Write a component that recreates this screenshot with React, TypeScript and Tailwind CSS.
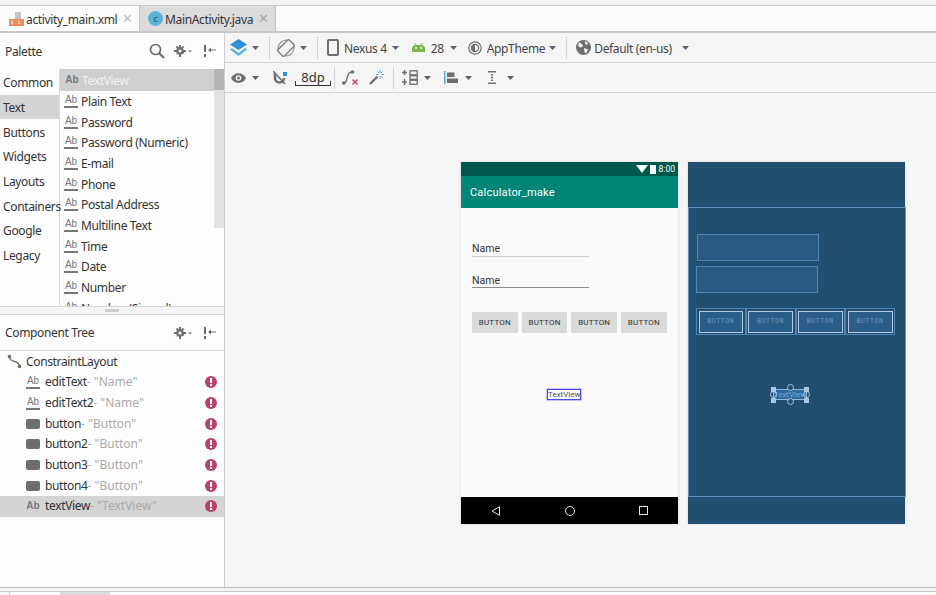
const Caret = ({ className = "" }: { className?: string }) => (
  <svg width="7" height="4" viewBox="0 0 7 4" className={className}>
    <path d="M0 0h7L3.500 4z" fill="#5e6266" />
  </svg>
);

const Sep = ({ className = "" }: { className?: string }) => (
  <div className={`w-px h-[22px] bg-[#d4d4d4] ${className}`} />
);

const AbIcon = ({ line = true }: { line?: boolean }) => (
  <div className="w-[14px] flex flex-col items-center shrink-0">
    <span className={`text-[10px] leading-[10px] tracking-normal text-[#777] font-['Liberation_Sans',sans-serif] ${line ? "font-normal" : "font-semibold"}`}>Ab</span>
    {line && <div className="w-[14px] h-[2px] mt-[1px] bg-[#777]" />}
  </div>
);

const GearMenu = () => (
  <svg width="18" height="14" viewBox="0 0 18 14">
    <g fill="#6e6e6e">
      <circle cx="6" cy="7" r="3.800" />
      <path d="M5 1h2v12H5zM0 6h12v2H0z" />
      <path d="M1.800 3.200 3.200 1.800l7 7-1.400 1.400zM1.800 10.800l7-9 1.400 1.400-7 7z" />
    </g>
    <circle cx="6" cy="7" r="1.500" fill="#fdfdfd" />
    <path d="M14 6.500h4l-2 2z" fill="#6e6e6e" />
  </svg>
);

const Pin = () => (
  <svg width="12" height="12" viewBox="0 0 12 12">
    <path d="M0 0h2v7H0zM0 9h2v3H0z" fill="#6e6e6e" />
    <path d="M5 4.500h7v1H5z" fill="#6e6e6e" />
    <path d="M4 5l3-2.500v5z" fill="#6e6e6e" />
  </svg>
);

const ErrorDot = () => (
  <div className="w-[12px] h-[12px] rounded-full bg-[#b8426a] flex flex-col items-center justify-center shrink-0">
    <div className="w-[2px] h-[5px] bg-white" />
    <div className="w-[2px] h-[2px] mt-[1px] bg-white" />
  </div>
);

const paletteCats = ["Common", "Text", "Buttons", "Widgets", "Layouts", "Containers", "Google", "Legacy"];
const paletteItems = [
  "Plain Text",
  "Password",
  "Password (Numeric)",
  "E-mail",
  "Phone",
  "Postal Address",
  "Multiline Text",
  "Time",
  "Date",
  "Number",
  "Number (Signed)",
];

const treeItems = [
  { name: "editText", label: '"Name"', kind: "text" },
  { name: "editText2", label: '"Name"', kind: "text" },
  { name: "button", label: '"Button"', kind: "button" },
  { name: "button2", label: '"Button"', kind: "button" },
  { name: "button3", label: '"Button"', kind: "button" },
  { name: "button4", label: '"Button"', kind: "button" },
  { name: "textView", label: '"TextView"', kind: "view" },
];

const Palette = () => (
  <div className="h-[273px] flex flex-col shrink-0">
    <div className="h-[36px] flex items-center pl-[5px] pr-[8px] shrink-0">
      <span className="text-[#333] pt-[2px]">Palette</span>
      <svg width="16" height="16" viewBox="0 0 16 16" className="ml-auto">
        <circle cx="6.500" cy="6.500" r="5" fill="none" stroke="#6e6e6e" strokeWidth="1.700" />
        <path d="M10 10l5 5" stroke="#6e6e6e" strokeWidth="2.200" />
      </svg>
      <div className="ml-[9px] flex"><GearMenu /></div>
      <div className="ml-[12px] flex"><Pin /></div>
    </div>
    <div className="flex flex-1 overflow-hidden">
      <div className="w-[60px] border-r border-[#d8d8d8] shrink-0 pt-[1px]">
        {paletteCats.map((c) => (
          <div
            key={c}
            className={`h-[24.7px] pl-[3px] pt-[2px] flex items-center text-[#333] ${c === "Text" ? "bg-[#d4d4d4]" : ""}`}
          >
            {c}
          </div>
        ))}
      </div>
      <div className="flex-1 flex relative overflow-hidden">
        <div className="flex-1">
          <div className="h-[22px] bg-[#cfcfcf] flex items-center pl-[5px] gap-[3px]">
            <AbIcon line={false} />
            <span className="text-[#f2f2f2] pt-[1px]">TextView</span>
          </div>
          {paletteItems.map((p) => (
            <div key={p} className="h-[20.7px] flex items-center pl-[4px] gap-[3px] text-[#333]">
              <AbIcon />
              <span className="pt-[1px]">{p}</span>
            </div>
          ))}
        </div>
        <div className="w-[10px] h-[159px] bg-[#e2e2e2] shrink-0">
          <div className="h-[21px] bg-[#b4b4b4]" />
        </div>
      </div>
    </div>
  </div>
);

const ComponentTree = () => (
  <div className="flex-1 flex flex-col">
    <div className="h-[36px] flex items-center pl-[5px] pr-[8px] border-b border-[#d4d4d4] shrink-0">
      <span className="text-[#333]">Component Tree</span>
      <div className="ml-auto flex"><GearMenu /></div>
      <div className="ml-[12px] flex"><Pin /></div>
    </div>
    <div className="h-[21px] flex items-center pl-[7px] gap-[4px] text-[#333]">
      <svg width="15" height="15" viewBox="0 0 15 15">
        <circle cx="2.500" cy="2.500" r="1.800" fill="#6e6e6e" />
        <circle cx="12.500" cy="12.500" r="1.800" fill="#6e6e6e" />
        <path d="M2.500 3c1 7 9 2 10 9" fill="none" stroke="#6e6e6e" strokeWidth="1.400" />
      </svg>
      <span>ConstraintLayout</span>
    </div>
    {treeItems.map((t) => (
      <div
        key={t.name}
        className={`h-[20.7px] flex items-center pl-[26px] pr-[7px] ${t.kind === "view" ? "bg-[#d4d4d4]" : ""}`}
      >
        {t.kind === "button" ? (
          <div className="w-[14px] h-[10px] rounded-[2px] bg-[#6e6e6e] shrink-0" />
        ) : (
          <AbIcon line={t.kind === "text"} />
        )}
        <span className="ml-[5px] text-[#333]">{t.name}</span>
        <span className="text-[#aaa] tracking-normal">- {t.label}</span>
        <div className="ml-auto"><ErrorDot /></div>
      </div>
    ))}
  </div>
);

const Toolbar1 = () => (
  <div className="h-[30px] flex items-center border-b border-[#d6d6d6] text-[#444] shrink-0">
    <svg width="17" height="17" viewBox="0 0 17 17" className="ml-[5px]">
      <path d="M2 9l-2 1.500L8.500 17l8.500-6.500L15 9l-6.500 5z" fill="#5ab0e8" />
      <path d="M8.500 0 17 5.500 8.500 11 0 5.500z" fill="#2f8fd8" />
    </svg>
    <Caret className="ml-[5px]" />
    <Sep className="ml-[10px]" />
    <svg width="18" height="18" viewBox="0 0 18 18" className="ml-[7px]">
      <path d="M1.500 11.500A8 8 0 0 1 11.500 1.500M16.500 6.500A8 8 0 0 1 6.500 16.500" fill="none" stroke="#9a9a9a" strokeWidth="1.200" />
      <rect x="4.500" y="1" width="9" height="16" rx="1.500" transform="rotate(45 9 9)" fill="#f5f5f5" stroke="#7e7e7e" strokeWidth="1.400" />
    </svg>
    <Caret className="ml-[5px]" />
    <Sep className="ml-[10px]" />
    <svg width="12" height="17" viewBox="0 0 12 17" className="ml-[9px]">
      <rect x="1" y="1" width="10" height="15" rx="1" fill="none" stroke="#6e6e6e" strokeWidth="2" />
    </svg>
    <span className="ml-[5px] pt-[2px]">Nexus 4</span>
    <Caret className="ml-[5px]" />
    <svg width="13" height="9" viewBox="0 0 13 9" className="ml-[13px]">
      <path d="M0 9V5a4 4 0 0 1 4-3h5a4 4 0 0 1 4 3v4z" fill="#7ab648" />
      <path d="M2.500 0l2 2.500M10.500 0l-2 2.500" stroke="#7ab648" />
      <circle cx="4" cy="5" r="1" fill="#f5f5f5" />
      <circle cx="9" cy="5" r="1" fill="#f5f5f5" />
    </svg>
    <span className="ml-[6px] pt-[2px]">28</span>
    <Caret className="ml-[6px]" />
    <svg width="14" height="14" viewBox="0 0 14 14" className="ml-[11px]">
      <circle cx="7" cy="7" r="6.200" fill="none" stroke="#6e6e6e" strokeWidth="1.200" />
      <circle cx="7" cy="7" r="3.600" fill="none" stroke="#6e6e6e" strokeWidth="1.200" />
      <path d="M7 3.400a3.600 3.600 0 0 0 0 7.200z" fill="#6e6e6e" />
    </svg>
    <span className="ml-[5px] pt-[2px]">AppTheme</span>
    <Caret className="ml-[4px]" />
    <Sep className="ml-[10px]" />
    <svg width="15" height="15" viewBox="0 0 15 15" className="ml-[9px]">
      <circle cx="7.500" cy="7.500" r="7.500" fill="#6e6e6e" />
      <path d="M3 2.500l3 1.500 1 2-2 1.500L2 6zM8 8l4 1.500-2 4-1.500-1.500zM9 1.500l3 1-1 2.500-2-1z" fill="#f5f5f5" />
    </svg>
    <span className="ml-[3px] pt-[2px]">Default (en-us)</span>
    <Caret className="ml-[10px]" />
  </div>
);

const Toolbar2 = () => (
  <div className="h-[30px] flex items-center border-b border-[#d6d6d6] text-[#333] shrink-0">
    <svg width="15" height="10" viewBox="0 0 15 10" className="ml-[6px]">
      <path d="M0 5c3-6.500 12-6.500 15 0-3 6.500-12 6.500-15 0z" fill="#6e6e6e" />
      <circle cx="7.500" cy="5" r="2.800" fill="#f5f5f5" />
      <circle cx="7.500" cy="5" r="1.500" fill="#6e6e6e" />
    </svg>
    <Caret className="ml-[6px]" />
    <svg width="14" height="14" viewBox="0 0 14 14" className="ml-[14px]">
      <path d="M2 2v5a4.500 4.500 0 0 0 9 0" fill="none" stroke="#6e6e6e" strokeWidth="2.600" />
      <path d="M0 0l12 13" stroke="#6e6e6e" strokeWidth="1.500" />
      <rect x="10" y="1" width="4" height="4" fill="#3592d8" />
    </svg>
    <div className="ml-[8px] w-[36px] h-[16px] relative flex justify-center text-[13px] leading-[15px] tracking-normal border-b border-[#333]">
      8dp
      <div className="absolute left-0 bottom-0 w-px h-[4px] bg-[#333]" />
      <div className="absolute right-0 bottom-0 w-px h-[4px] bg-[#333]" />
    </div>
    <Sep className="ml-[3px]" />
    <svg width="17" height="15" viewBox="0 0 17 15" className="ml-[7px]">
      <path d="M1.500 13c6 0 1-10 8-11" fill="none" stroke="#6e6e6e" strokeWidth="1.400" />
      <circle cx="1.800" cy="13" r="1.800" fill="#6e6e6e" />
      <circle cx="10.500" cy="2" r="1.800" fill="#6e6e6e" />
      <path d="M10.500 9.500l5 5M15.500 9.500l-5 5" stroke="#c2466c" strokeWidth="1.500" />
    </svg>
    <svg width="15" height="15" viewBox="0 0 15 15" className="ml-[10px]">
      <path d="M1 14l7.500-7.500" stroke="#6e6e6e" strokeWidth="2.400" />
      <path d="M11 0v3M11 6v3M7 4.500h2.500M12.500 4.500H15M8.500 1.500l1.500 1.500M13.500 1.500 12 3M13.500 7.500 12 6" stroke="#55a8e0" strokeWidth="1" />
    </svg>
    <Sep className="ml-[9px]" />
    <svg width="16" height="15" viewBox="0 0 16 15" className="ml-[8px]">
      <path d="M2.500 0v5M0 2.500h5M2.500 9v6M0 12h5" stroke="#6e6e6e" strokeWidth="1.500" />
      <rect x="8" y="0.800" width="7.200" height="4" fill="none" stroke="#6e6e6e" strokeWidth="1.300" />
      <rect x="8" y="5.800" width="7.200" height="3.500" fill="none" stroke="#6e6e6e" strokeWidth="1.300" />
      <rect x="8" y="10.300" width="7.200" height="4" fill="none" stroke="#6e6e6e" strokeWidth="1.300" />
    </svg>
    <Caret className="ml-[6px]" />
    <svg width="15" height="13" viewBox="0 0 15 13" className="ml-[13px]">
      <path d="M0 0h1.400v13H0z" fill="#4aa3e0" />
      <rect x="3" y="1.500" width="7.500" height="4.500" fill="#6e6e6e" />
      <rect x="3" y="7.500" width="11" height="4.500" fill="#6e6e6e" />
    </svg>
    <Caret className="ml-[6px]" />
    <svg width="8" height="13" viewBox="0 0 8 13" className="ml-[16px]">
      <path d="M0 0h8v1.500H0zM0 11.500h8V13H0zM3 3h2v1.500H3zM3 5.800h2v1.500H3zM3 8.500h2V10H3z" fill="#6e6e6e" />
    </svg>
    <Caret className="ml-[11px]" />
  </div>
);

const PhoneButton = () => (
  <div className="w-[45.700px] h-[21px] bg-[#d9dada] rounded-[1px] flex items-center justify-center text-[8px] tracking-[0.2px] text-[#333]">
    BUTTON
  </div>
);

const Phone = () => (
  <div className="w-[217px] h-[362px] flex flex-col tracking-normal font-['Roboto',sans-serif] shadow-[0_0_2px_rgba(0,0,0,0.15)]">
    <div className="h-[14px] bg-[#00574b] flex items-center justify-end pr-[3px] gap-[2px] text-white text-[8.500px]">
      <svg width="12" height="8" viewBox="0 0 12 8"><path d="M0 0h12L6 8z" fill="#fff" /></svg>
      <div className="w-[6px] h-[9px] bg-white" />
      <span className="ml-[1px]">8:00</span>
    </div>
    <div className="h-[32px] bg-[#008577] flex items-center pl-[9px] pt-[2px] text-white text-[11px] tracking-[0.2px]">
      Calculator_make
    </div>
    <div className="flex-1 bg-[#fafafa] relative pl-[11px] pt-[32px]">
      <div className="w-[117px] h-[17px] border-b border-[#cfcfcf] text-[10.500px] leading-[18px] text-[#333]">Name</div>
      <div className="w-[117px] h-[17px] mt-[14px] border-b border-[#8a8a8a] text-[10.500px] leading-[19px] text-[#333]">Name</div>
      <div className="flex mt-[24px] gap-[4px]">
        <PhoneButton />
        <PhoneButton />
        <PhoneButton />
        <PhoneButton />
      </div>
      <div className="absolute left-[86px] top-[181px] w-[34px] h-[11px] border border-[#4a4ae8] shadow-[0_0_0_1px_#c0c0ff] text-[8px] leading-[9px] text-[#555] overflow-hidden">TextView</div>
    </div>
    <div className="h-[27px] bg-black flex items-center pl-[30px]">
      <svg width="9" height="10" viewBox="0 0 9 10"><path d="M8.500 0.700v8.600L1 5z" fill="none" stroke="#e8e8e8" /></svg>
      <div className="ml-[65px] w-[10px] h-[10px] rounded-full border border-[#e8e8e8]" />
      <div className="ml-[64px] w-[9px] h-[9px] border border-[#e8e8e8]" />
    </div>
  </div>
);

const BlueprintButton = () => (
  <div className="w-[49.750px] h-[27px] border border-[#4f86b5] p-[1.500px]">
    <div className="w-full h-full border border-[#b5c9e0] bg-[#2a5d88] flex items-center justify-center font-['Liberation_Mono',monospace] text-[6.500px] tracking-[0.6px] text-[#6e9cc8]">
      BUTTON
    </div>
  </div>
);

const Handle = ({ className }: { className: string }) => (
  <div className={`absolute ${className}`} />
);

const Blueprint = () => (
  <div className="w-[217px] h-[362px] flex flex-col tracking-normal bg-[#224e70] font-['Roboto',sans-serif] shadow-[0_0_2px_rgba(0,0,0,0.15)]">
    <div className="h-[45px] shrink-0" />
    <div className="h-[290px] -mr-px border border-[#5d93c2] relative pl-[7px] pt-[26px]">
      <div className="w-[122px] h-[27px] ml-px border border-[#4f86b5] bg-[#2a5a82]" />
      <div className="w-[122px] h-[27px] mt-[5px] border border-[#4f86b5] bg-[#2a5a82]" />
      <div className="flex mt-[15px]">
        <BlueprintButton />
        <BlueprintButton />
        <BlueprintButton />
        <BlueprintButton />
      </div>
      <div className="absolute left-[84px] top-[181px] w-[34px] h-[11px] border border-[#8fb5d8] bg-[#2f6a9c] flex items-center justify-center text-[8px] text-[#79a9d8] overflow-hidden whitespace-nowrap">
        TextView
      </div>
      <Handle className="left-[82px] top-[179px] w-[5px] h-[5px] bg-[#a9c6e2]" />
      <Handle className="left-[115px] top-[179px] w-[5px] h-[5px] bg-[#a9c6e2]" />
      <Handle className="left-[82px] top-[190px] w-[5px] h-[5px] bg-[#a9c6e2]" />
      <Handle className="left-[115px] top-[190px] w-[5px] h-[5px] bg-[#a9c6e2]" />
      <Handle className="left-[98px] top-[176px] w-[7px] h-[7px] rounded-full border border-[#a9c6e2] bg-[#224e70]" />
      <Handle className="left-[98px] top-[190px] w-[7px] h-[7px] rounded-full border border-[#a9c6e2] bg-[#224e70]" />
      <Handle className="left-[81px] top-[183px] w-[7px] h-[7px] rounded-full border border-[#a9c6e2]" />
      <Handle className="left-[114px] top-[183px] w-[7px] h-[7px] rounded-full border border-[#a9c6e2]" />
    </div>
  </div>
);

export default function App() {
  return (
    <div className="w-[936px] h-[595px] flex flex-col overflow-hidden bg-[#f5f5f5] text-[12px] tracking-[-0.35px] font-['Noto_Sans',sans-serif]">
      <div className="h-[5px] bg-[#f2f2f2] border-b border-[#c8c8c8] shrink-0 box-content" />
      <div className="h-[27px] flex bg-[#fbfbfb] border-b-2 border-[#c9c9c9] shrink-0">
        <div className="w-[139px] flex items-center text-[#333]">
          <svg width="16" height="16" viewBox="0 0 16 16" className="ml-[9px]">
            <path d="M6 1h6v7H6z" fill="#c4c4c4" />
            <rect x="0" y="8" width="15" height="7" fill="#ef8a5c" />
            <path d="M4 10l-2 1.500 2 1.500M9 10l2 1.500-2 1.500" fill="none" stroke="#fff" />
          </svg>
          <span className="ml-px pt-[2px]">activity_main.xml</span>
          <span className="ml-[5px] text-[13px] leading-none text-[#c0c0c0]">✕</span>
        </div>
        <div className="w-[137px] flex items-center bg-[#dcdcdc] border-x border-[#c4c4c4] text-[#333]">
          <div className="ml-[8px] w-[15px] h-[15px] rounded-full bg-[#58b4d8] flex items-center justify-center text-[9px] text-[#1f4f66]">c</div>
          <span className="ml-[2px] pt-[2px]">MainActivity.java</span>
          <span className="ml-[5px] text-[13px] leading-none text-[#aaa]">✕</span>
        </div>
      </div>
      <div className="flex-1 flex min-h-0">
        <div className="w-[225px] flex flex-col border-r border-[#d0d0d0] bg-[#fdfdfd] shrink-0">
          <Palette />
          <div className="h-[9px] bg-[#f5f5f5] border-y border-[#d4d4d4] flex items-center justify-center shrink-0">
            <div className="w-[14px] h-[3px] bg-[#cfcfcf]" />
          </div>
          <ComponentTree />
        </div>
        <div className="flex-1 flex flex-col min-w-0">
          <Toolbar1 />
          <Toolbar2 />
          <div className="flex-1 flex gap-[10px] pl-[236px] pt-[69px]">
            <Phone />
            <Blueprint />
          </div>
        </div>
      </div>
      <div className="h-[8px] border-t border-[#bdbdbd] flex items-end bg-[#f5f5f5] shrink-0">
        <div className="w-full h-[4px] flex border-t border-[#c8c8c8] bg-white">
          <div className="w-[10px] bg-[#f5f5f5] border-r border-[#c8c8c8]" />
          <div className="w-[50px] bg-white" />
          <div className="w-[50px] bg-[#dcdcdc]" />
        </div>
      </div>
    </div>
  );
}
